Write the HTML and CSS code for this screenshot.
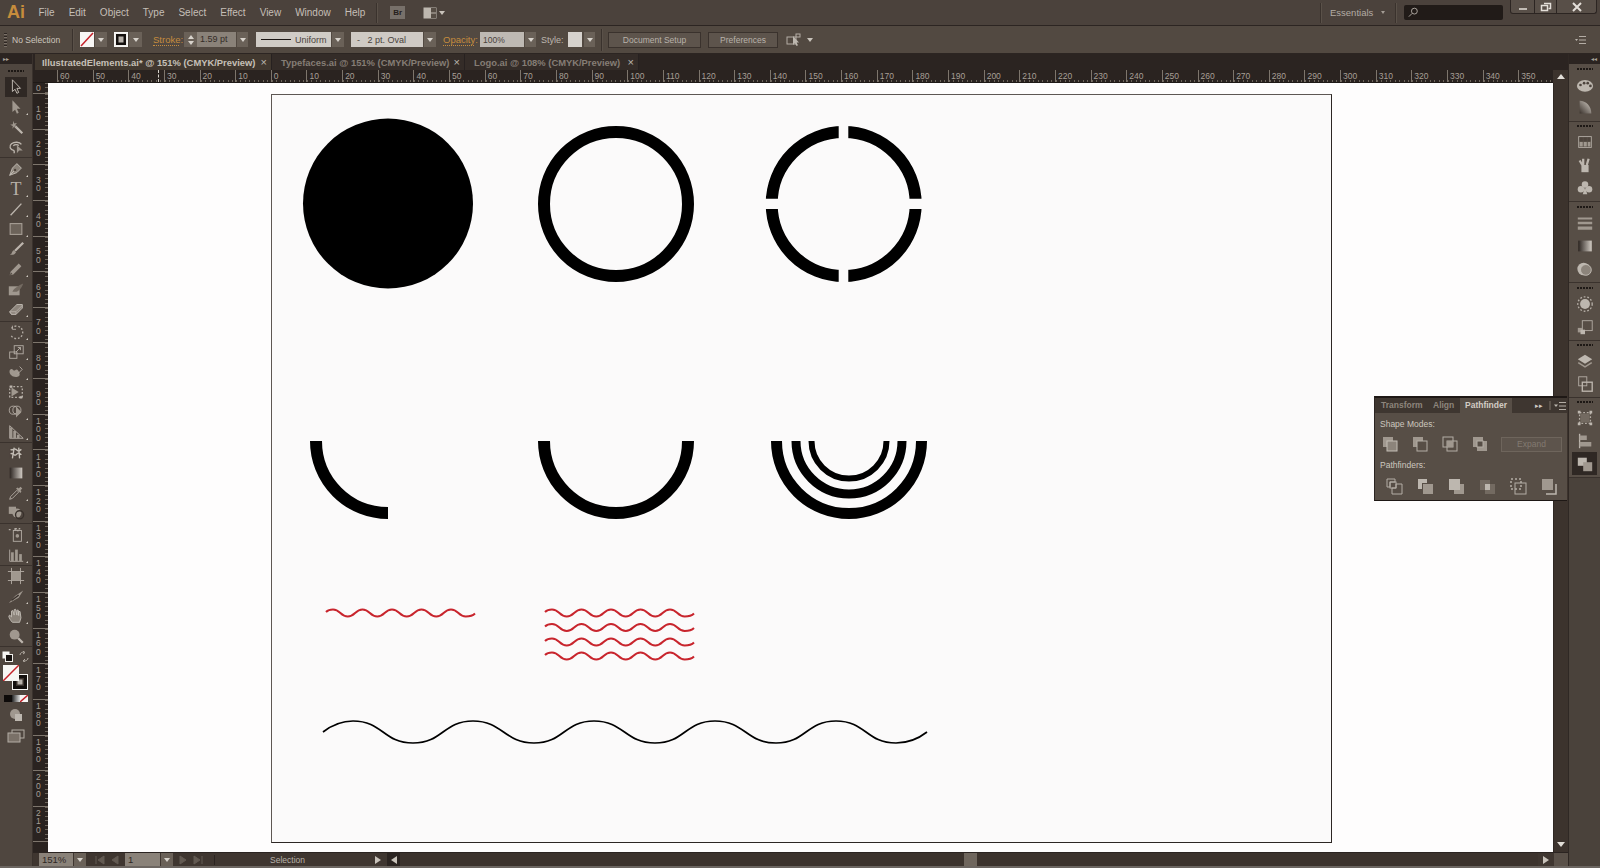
FILE: index.html
```html
<!DOCTYPE html>
<html lang="en">
<head>
<meta charset="utf-8">
<title>Adobe Illustrator</title>
<link rel="stylesheet" href="styles.css">
</head>
<body>
<div class="app">
  <header class="menubar">
    <span class="logo">Ai</span>
    <nav class="menus"><span>File</span><span>Edit</span><span>Object</span><span>Type</span><span>Select</span><span>Effect</span><span>View</span><span>Window</span><span>Help</span></nav>
    <i class="vsep mb-sep"></i>
    <span class="br">Br</span>
    <svg class="layout-ic" viewBox="0 0 14 12"><rect x=".5" y=".5" width="13" height="11" class="lf"/><rect x="8" y="1" width="5" height="4.5" class="df"/><rect x="8" y="6.5" width="5" height="4.5" class="df"/></svg>
    <i class="tri layout-tri"></i>
    <i class="vsep ess-sep"></i>
    <span class="essentials">Essentials</span>
    <i class="tri small ess-tri"></i>
    <i class="vsep ess-sep2"></i>
    <div class="search"><svg class="search-ic" viewBox="0 0 12 12"><circle cx="7.5" cy="4.5" r="3.2"/><path d="M5 7 1.5 10.5"/></svg></div>
    <div class="winbtns">
      <span class="win w-min"><svg viewBox="0 0 12 10"><path d="M2 7h8"/></svg></span>
      <span class="win w-res"><svg viewBox="0 0 12 10"><rect x="1.5" y="3.5" width="6" height="5"/><path d="M4 1.5h6.500v5h-2"/></svg></span>
      <span class="win w-close"><svg viewBox="0 0 12 10"><path d="M2 1l8 8M10 1l-8 8"/></svg></span>
    </div>
  </header>

  <section class="control">
    <i class="bar-grip"></i>
    <span class="lbl nosel">No Selection</span>
    <i class="vsep c-sep"></i>
    <svg class="swatch m7" viewBox="0 0 14 15"><rect width="14" height="15" class="white"/><path d="M1 14 13 1" class="red"/></svg>
    <i class="dd w12 m1"></i>
    <svg class="swatch m7" viewBox="0 0 14 15"><rect width="14" height="15" class="white"/><rect x="1.500" y="1.500" width="11" height="12" class="blk"/><rect x="4.500" y="4.500" width="5" height="6" class="gry"/></svg>
    <i class="dd w13 m1"></i>
    <span class="lbl orange m11 w26">Stroke:</span>
    <span class="spin m5"><i class="up"></i><i class="down"></i></span>
    <span class="field w39">1.59 pt</span>
    <i class="dd w11 m1"></i>
    <span class="lightbox m8 w75"><i class="strokeline"></i>Uniform</span>
    <i class="dd w12 m1"></i>
    <span class="lightbox m7 w72 oval">-&nbsp;&nbsp;&nbsp;2 pt. Oval</span>
    <i class="dd w12 m1"></i>
    <span class="lbl orange m7 w31">Opacity:</span>
    <span class="lightbox m6 w44 pct">100%</span>
    <i class="dd w11 m1"></i>
    <span class="lbl m5 w22">Style:</span>
    <i class="styleswatch m5"></i>
    <i class="dd w11 m2"></i>
    <i class="vsep c-sep2"></i>
    <span class="btn m6 w93">Document Setup</span>
    <span class="btn m7 w70">Preferences</span>
    <svg class="arrange m8" viewBox="0 0 16 14"><rect x="1" y="4" width="9" height="7" class="o"/><path d="M7 3v9l2-2 1.500 3 1.500-.7L10.500 9.500H13z" class="lf"/><rect x="10" y="1" width="4" height="3" class="o"/></svg>
    <i class="tri m5"></i>
    <svg class="ctl-menu" viewBox="0 0 12 10"><path d="M1 4h3L2.500 6z" class="lf"/><path d="M5 1.500h7M5 5h7M5 8.500h7" class="o"/></svg>
  </section>

  <div class="workspace">
    <aside class="tools">
      <div class="panel-top"><span class="chev">&#9656;&#9656;</span></div>
      <div class="grip tool-grip"></div>
      <div class="tgroup g1">
        <div class="tool on"><svg viewBox="0 0 20 20"><path d="M6 2v13l3-2.500 2 4.500 2-1-2-4.500h4z" class="outline"/></svg></div>
        <div class="tool more"><svg viewBox="0 0 20 20"><path d="M6 2.500v13l3-2.500 2 4.500 2-1-2-4.500h4z" class="s"/></svg></div>
        <div class="tool"><svg viewBox="0 0 20 20"><path d="M9 9l8 8" class="thick"/><path d="M7 3l1 3 3-.5-2 2.500 2 3-3-1.500L6 12l.5-3-3-1.500 3-.5z" class="s"/></svg></div>
        <div class="tool"><svg viewBox="0 0 20 20"><path d="M8 14C3 13 2 9 5 6.500s9-2.500 11 .5M7 8.500c1.500-1.500 5-1.500 6 0" class="o2"/><path d="M11 8v9l2.500-3 4 0z" class="s"/><path d="M8 14v3" class="o2"/></svg></div>
      </div>
      <div class="tgroup g2">
        <div class="tool more"><svg viewBox="0 0 20 20"><path d="M3 17l3-8 5-5 5 5-5 5zM3 17l5-5" class="s2"/><circle cx="9" cy="11" r="1.300" class="dk"/></svg></div>
        <div class="tool more tool-t"><span>T</span></div>
        <div class="tool more"><svg viewBox="0 0 20 20"><path d="M4 17 16 4" class="o2"/></svg></div>
        <div class="tool more"><svg viewBox="0 0 20 20"><rect x="3.500" y="4" width="13" height="12" class="rectf"/></svg></div>
        <div class="tool"><svg viewBox="0 0 20 20"><path d="M9 12 18 3" class="thick"/><path d="M3 16c3 0 2-4 5-5l2 2.500c-1 2.500-4 3.500-7 2.500z" class="s"/></svg></div>
        <div class="tool more"><svg viewBox="0 0 20 20"><path d="M3 17l1-4 9-9 3 3-9 9z" class="s"/><path d="M3 17l1.500-3 1.500 1.500z" class="dk"/></svg></div>
        <div class="tool"><svg viewBox="0 0 20 20"><path d="M2 7h12v10H2z" class="s"/><path d="M6 13c2-4 7-7 12-9-1 3-3 7-7 9z" class="dk2"/></svg></div>
        <div class="tool more"><svg viewBox="0 0 20 20"><path d="M3 13 11 5h6v4l-7 7H5z" class="s2"/><path d="M3 13h7v3H5zM10 13l7-7" class="o"/></svg></div>
      </div>
      <div class="tgroup g3">
        <div class="tool more"><svg viewBox="0 0 20 20"><path d="M5 6a7 7 0 1 1-1 7" class="dash"/><path d="M6 3v4h4" class="o"/></svg></div>
        <div class="tool more"><svg viewBox="0 0 20 20"><rect x="3" y="10" width="8" height="7" class="o"/><rect x="8" y="3" width="10" height="9" class="o"/><path d="M10 10l5-5M12 5h3v3" class="o"/></svg></div>
        <div class="tool more"><svg viewBox="0 0 20 20"><path d="M3 8c3-4 4 2 6 0s4 0 5 4-5 4-7 3-5-3-4-7z" class="s"/><path d="M14 4l3 3-5 5" class="o"/></svg></div>
        <div class="tool"><svg viewBox="0 0 20 20"><rect x="3" y="4" width="14" height="12" class="dash"/><path d="M5 5v10l8-5z" class="s"/><path d="M3 4h3M14 16h3" class="thick"/></svg></div>
        <div class="tool more"><svg viewBox="0 0 20 20"><circle cx="7" cy="8" r="4.500" class="o"/><circle cx="11" cy="8" r="4.500" class="o"/><path d="M10 4v12l6-6z" class="s"/></svg></div>
        <div class="tool more"><svg viewBox="0 0 20 20"><path d="M3 3v14h15z" class="o"/><path d="M3 5h3v12H3zM7 9h3v8H7zM11 13h3v4h-3z" class="s"/></svg></div>
      </div>
      <div class="tgroup g4">
        <div class="tool"><svg viewBox="0 0 20 20"><rect x="3" y="4" width="14" height="12" class="dk"/><path d="M4 6c3 2 3-2 6 0s2 3 6 0M4 11c3-2 4 3 6 1s3-3 6 0M8 4l-2 12M13 4l1 12" class="meshl"/></svg></div>
        <div class="tool"><svg viewBox="0 0 20 20"><defs><linearGradient id="gt"><stop offset="0" stop-color="#2d2622"/><stop offset="1" stop-color="#cfc9c2"/></linearGradient></defs><rect x="3" y="4" width="14" height="12" fill="url(#gt)"/></svg></div>
        <div class="tool more"><svg viewBox="0 0 20 20"><path d="M3 17l1-3 7-7 2 2-7 7z" class="o"/><path d="M10 5l5 5 1-2-1-1 2-2-2-2-2 2-1-1z" class="s"/></svg></div>
        <div class="tool"><svg viewBox="0 0 20 20"><rect x="2" y="3" width="8" height="8" class="s"/><circle cx="11" cy="10" r="5" class="s"/><circle cx="14" cy="12" r="4.500" class="dko"/></svg></div>
      </div>
      <div class="tgroup g5">
        <div class="tool more"><svg viewBox="0 0 20 20"><rect x="7" y="5" width="9" height="12" class="o"/><circle cx="11.500" cy="11" r="2" class="s"/><path d="M9 3h5v2H9zM2 4h4" class="dash"/></svg></div>
        <div class="tool more"><svg viewBox="0 0 20 20"><path d="M3 4v13h15" class="o"/><rect x="4.500" y="7" width="3" height="10" class="s"/><rect x="9" y="4" width="3" height="13" class="s"/><rect x="13.500" y="9" width="3" height="8" class="s"/></svg></div>
      </div>
      <div class="tgroup g6">
        <div class="tool"><svg viewBox="0 0 20 20"><path d="M1 5h18M1 15h18M5 1v18M15 1v18" class="o"/><rect x="5" y="5" width="10" height="10" class="s"/></svg></div>
        <div class="tool more"><svg viewBox="0 0 20 20"><path d="M2 18l7-8 9-6-5 8z" class="s"/><path d="M5 15l8-6" class="dko"/></svg></div>
        <div class="tool more"><svg viewBox="0 0 20 20"><path d="M6 17c-2-2-4-5-4-7l1-1 2 2V4.500l1.500-.5L8 9V3l1.500-.5L11 9V3.500l1.500 0L13 9.500V5h1.500L15.500 12l-1.500 5z" class="s2"/></svg></div>
        <div class="tool"><svg viewBox="0 0 20 20"><circle cx="8.500" cy="8.500" r="5.500" class="s"/><path d="M12.500 12.500l5 5" class="thick"/></svg></div>
      </div>
      <div class="colorbox">
        <div class="cb-row">
          <svg viewBox="0 0 11 11"><rect x=".5" y=".5" width="7" height="7" class="white"/><rect x="3.500" y="3.500" width="7" height="7" class="blk"/></svg>
          <svg viewBox="0 0 11 11"><path d="M1 4C1 2 3 1 5 1M9 7c0 2-2 3-4 3M4 0 6 1.500 4 3M6 8 4 10 6 11" class="o"/></svg>
        </div>
        <div class="cb-swatches">
          <svg class="cb-stroke" viewBox="0 0 16 16"><rect width="16" height="16" class="white"/><rect x="2.500" y="2.500" width="11" height="11" class="blk2"/><rect x="5.500" y="5.500" width="5" height="5" class="gry"/></svg>
          <svg class="cb-fill" viewBox="0 0 16 16"><rect width="16" height="16" class="white"/><path d="M0 16 16 0" class="red"/></svg>
        </div>
        <div class="cb-modes"><i class="m-black"></i><i class="m-grad"></i><svg viewBox="0 0 8 7"><rect width="8" height="7" class="white"/><path d="M0 7 8 0" class="red"/></svg></div>
        <svg class="cb-draw" viewBox="0 0 14 14"><circle cx="6" cy="6" r="5" class="s"/><rect x="6" y="6" width="7" height="7" class="lf"/></svg>
        <svg class="cb-screen" viewBox="0 0 18 14"><rect x="5" y="1" width="12" height="8" class="o"/><rect x="1" y="4" width="12" height="9" class="scr"/></svg>
      </div>
    </aside>

    <main class="center">
      <div class="tabs">
        <div class="tab active w237">IllustratedElements.ai* @ 151% (CMYK/Preview)<span class="x">&times;</span></div>
        <div class="tab w193">Typefaces.ai @ 151% (CMYK/Preview)<span class="x">&times;</span></div>
        <div class="tab w174">Logo.ai @ 108% (CMYK/Preview)<span class="x">&times;</span></div>
      </div>
      <div class="corner"></div>
      <div class="hruler">
        <span>60</span><span>50</span><span>40</span><span>30</span><span>20</span><span>10</span><span>0</span><span>10</span><span>20</span><span>30</span><span>40</span><span>50</span><span>60</span><span>70</span><span>80</span><span>90</span><span>100</span><span>110</span><span>120</span><span>130</span><span>140</span><span>150</span><span>160</span><span>170</span><span>180</span><span>190</span><span>200</span><span>210</span><span>220</span><span>230</span><span>240</span><span>250</span><span>260</span><span>270</span><span>280</span><span>290</span><span>300</span><span>310</span><span>320</span><span>330</span><span>340</span><span>350</span>
        <i class="cursor-mark"></i>
      </div>
      <div class="scroll-up"><i class="tri up-tri"></i></div>
      <div class="vruler">
        <span class="zero">0</span><span>10</span><span>20</span><span>30</span><span>40</span><span>50</span><span>60</span><span>70</span><span>80</span><span>90</span><span>100</span><span>110</span><span>120</span><span>130</span><span>140</span><span>150</span><span>160</span><span>170</span><span>180</span><span>190</span><span>200</span><span>210</span>
      </div>
      <div class="canvas">
        <div class="artboard">
          <svg class="art" viewBox="272 95 1059 747">
            <defs>
              <clipPath id="quads">
                <rect x="760" y="120" width="78.700" height="78.700"/>
                <rect x="848.300" y="120" width="80" height="78.700"/>
                <rect x="760" y="209" width="78.700" height="80"/>
                <rect x="848.300" y="209" width="80" height="80"/>
              </clipPath>
              <path id="redwave" d="M0-1C2-3 4-3.500 7-3.500 14.400-3.500 14.400 3.500 21.750 3.500S29.100-3.500 36.500-3.500 43.900 3.500 51.250 3.500 58.600-3.500 66-3.500 73.400 3.500 80.750 3.500 88.100-3.500 95.500-3.500 102.900 3.500 110.250 3.500 117.600-3.500 125-3.500 132.400 3.500 139.750 3.500C144 3.500 147 2.500 149 0.500"/>
            </defs>
            <circle cx="388" cy="203.500" r="85"/>
            <circle class="ln" cx="616" cy="204" r="72" stroke-width="12"/>
            <circle class="ln" cx="843.700" cy="204" r="72" stroke-width="12" clip-path="url(#quads)"/>
            <path class="ln" d="M316 441A72 72 0 0 0 388 513" stroke-width="12"/>
            <path class="ln" d="M544 441A72 72 0 0 0 688 441" stroke-width="12"/>
            <path class="ln" d="M776.500 441A72.500 72.500 0 0 0 921.500 441" stroke-width="11"/>
            <path class="ln" d="M796 441A53 53 0 0 0 902 441" stroke-width="9"/>
            <path class="ln" d="M811.500 441A37.500 37.500 0 0 0 886.500 441" stroke-width="6"/>
            <use class="rw" href="#redwave" x="326" y="613"/>
            <use class="rw" href="#redwave" x="545" y="613"/>
            <use class="rw" href="#redwave" x="545" y="627.500"/>
            <use class="rw" href="#redwave" x="545" y="642"/>
            <use class="rw" href="#redwave" x="545" y="656"/>
            <path class="ln" stroke-width="1.700" d="M323 732C332 725 342 721 353 721 383 721 383 743 413 743S443 721 473 721 504 743 534 743 564 721 594 721 625 743 655 743 685 721 715 721 746 743 776 743 806 721 836 721 866 743 896 743C908 743 918 739 927 732"/>
          </svg>
        </div>
      </div>
      <div class="vscroll"><i class="tri down-tri"></i></div>
      <div class="status">
        <span class="sfield w34">151%</span><i class="dd w12 m1"></i>
        <span class="nav m8"><svg viewBox="0 0 12 10"><path d="M2 1v8M10 1v8L4 5z" class="navi"/></svg></span>
        <span class="nav"><svg viewBox="0 0 12 10"><path d="M9 1v8L3 5z" class="navi"/></svg></span>
        <span class="sfield w35 m1">1</span><i class="dd w12 m1"></i>
        <span class="nav m4"><svg viewBox="0 0 12 10"><path d="M3 1v8l6-4z" class="navi"/></svg></span>
        <span class="nav"><svg viewBox="0 0 12 10"><path d="M2 1v8l6-4zM10 1v8" class="navi"/></svg></span>
        <span class="statuslabel">Selection</span>
        <i class="sarrow right-a"></i>
        <i class="sarrow-box"><i class="sarrow left-a"></i></i>
        <span class="track"><i class="thumb"></i></span>
        <i class="sarrow right-a end-a"></i>
        <i class="scorner"></i>
      </div>
    </main>

    <aside class="dock">
      <div class="panel-top dock-top"><span class="chev">&#9666;&#9666;</span></div>
      <div class="dgroup">
        <div class="grip grip-l"></div>
        <div class="ditem"><svg viewBox="0 0 20 20"><ellipse cx="10" cy="11" rx="9" ry="6.500" class="lf"/><circle cx="5" cy="10" r="1.500" class="dk"/><circle cx="9" cy="8" r="1.500" class="dk"/><circle cx="13" cy="8" r="1.500" class="dk"/><circle cx="16" cy="11" r="1.500" class="dk"/></svg></div>
        <div class="ditem"><svg viewBox="0 0 20 20"><defs><linearGradient id="gq" x1="0" y1="1" x2="1" y2="0"><stop offset="0" stop-color="#3a322c"/><stop offset="1" stop-color="#d8d2ca"/></linearGradient></defs><path d="M4 2c7 0 13 6 13 14H4z" fill="url(#gq)"/></svg></div>
      </div>
      <div class="dgroup">
        <div class="grip"></div>
        <div class="ditem"><svg viewBox="0 0 20 20"><rect x="3" y="4" width="14" height="12" class="o"/><path d="M4 5h3.500v4H4zM8.500 5H12v4H8.500zM13 5h3v4h-3z" class="dk"/><path d="M4 10h3.500v5H4zM8.500 10H12v5H8.500zM13 10h3v5h-3z" class="s"/></svg></div>
        <div class="ditem"><svg viewBox="0 0 20 20"><path d="M6 10h8v8H6z" class="lf"/><path d="M8 10V3M12 10l2-7M7 10 4 5" class="thick"/></svg></div>
        <div class="ditem"><svg viewBox="0 0 20 20"><circle cx="10" cy="6" r="3.600" class="lf"/><circle cx="5.500" cy="11.500" r="3.600" class="lf"/><circle cx="14.500" cy="11.500" r="3.600" class="lf"/><path d="M10 8l-2.500 9h5z" class="lf"/></svg></div>
      </div>
      <div class="dgroup">
        <div class="grip grip-l"></div>
        <div class="ditem"><svg viewBox="0 0 20 20"><path d="M2 4h16v2H2zM2 8.500h16v3H2zM2 14h16v3.500H2z" class="s"/></svg></div>
        <div class="ditem"><svg viewBox="0 0 20 20"><defs><linearGradient id="gd"><stop offset="0" stop-color="#2b2420"/><stop offset="1" stop-color="#d2ccc4"/></linearGradient></defs><rect x="2.500" y="4" width="15" height="12" fill="url(#gd)"/></svg></div>
        <div class="ditem"><svg viewBox="0 0 20 20"><circle cx="8.500" cy="10" r="7" class="lf"/><circle cx="11" cy="11" r="6" class="s2"/></svg></div>
      </div>
      <div class="dgroup">
        <div class="grip grip-l"></div>
        <div class="ditem"><svg viewBox="0 0 20 20"><circle cx="10" cy="10" r="8" class="dash"/><circle cx="10" cy="10" r="5.500" class="lf"/></svg></div>
        <div class="ditem"><svg viewBox="0 0 20 20"><rect x="7" y="3" width="11" height="11" class="o"/><rect x="2" y="11" width="5" height="5" class="s"/><rect x="5" y="13" width="5" height="5" class="lf"/></svg></div>
      </div>
      <div class="dgroup">
        <div class="grip"></div>
        <div class="ditem"><svg viewBox="0 0 20 20"><path d="M10 3l8 5-8 5-8-5z" class="lf"/><path d="M3 11l7 4.500 7-4.500 1 1.500-8 5-8-5z" class="s"/></svg></div>
        <div class="ditem"><svg viewBox="0 0 20 20"><rect x="3" y="2" width="9" height="10" class="o"/><rect x="7" y="8" width="11" height="10" class="o2"/></svg></div>
      </div>
      <div class="dgroup">
        <div class="grip"></div>
        <div class="ditem"><svg viewBox="0 0 20 20"><rect x="4" y="4" width="12" height="12" class="dash"/><rect x="5" y="5" width="10" height="10" class="dk2"/><path d="M2 2h3v3H2zM15 2h3v3h-3zM2 15h3v3H2zM15 15h3v3h-3z" class="lf"/></svg></div>
        <div class="ditem"><svg viewBox="0 0 20 20"><path d="M4 2v16" class="o2"/><path d="M4 4h8v5H4zM4 11h13v5H4z" class="s"/></svg></div>
        <div class="ditem on"><svg viewBox="0 0 20 20"><rect x="2" y="3" width="10" height="9" class="lf"/><rect x="8" y="8" width="10" height="10" class="s"/></svg></div>
      </div>
    </aside>
  </div>
  <div class="bottomstrip"></div>

  <div class="pathfinder">
    <div class="pf-tabs">
      <span class="pf-tab t1">Transform</span><span class="pf-tab t2">Align</span><span class="pf-tab active">Pathfinder</span>
      <span class="pf-chev">&#9656;&#9656;</span><i class="pf-div"></i>
      <svg class="pf-menu" viewBox="0 0 12 10"><path d="M0 3.500h4L2 6z" class="lf"/><path d="M5 1.500h7M5 5h7M5 8.500h7" class="o"/></svg>
    </div>
    <div class="pf-title pf-t1">Shape Modes:</div>
    <div class="pf-row shape">
      <svg viewBox="0 0 20 20"><rect x="3" y="3" width="10" height="10" class="s"/><rect x="7" y="7" width="10" height="10" class="s2"/></svg>
      <svg viewBox="0 0 20 20"><path d="M3 3h10v4H7v6H3z" class="s"/><rect x="7" y="7" width="10" height="10" class="o"/></svg>
      <svg viewBox="0 0 20 20"><rect x="3" y="3" width="10" height="10" class="o"/><rect x="7" y="7" width="10" height="10" class="o"/><rect x="7" y="7" width="6" height="6" class="s"/></svg>
      <svg viewBox="0 0 20 20"><path d="M3 3h10v4H7v6H3zM13 7h4v10H7v-4h6z" class="s"/><rect x="7" y="7" width="6" height="6" class="o"/></svg>
      <span class="expand">Expand</span>
    </div>
    <div class="pf-title pf-t2">Pathfinders:</div>
    <div class="pf-row finders">
      <svg viewBox="0 0 20 20"><path d="M3 3h8v3H6v5H3z" class="o"/><rect x="6" y="6" width="6" height="6" class="o"/><path d="M12 8h6v10H8v-6h4z" class="o"/></svg>
      <svg viewBox="0 0 20 20"><path d="M3 3h9v4H7v6H3z" class="lf"/><path d="M8 8h10v10H8z" class="s"/></svg>
      <svg viewBox="0 0 20 20"><rect x="8" y="8" width="10" height="10" class="s"/><rect x="3" y="3" width="11" height="11" class="lf"/></svg>
      <svg viewBox="0 0 20 20"><rect x="3" y="4" width="10" height="10" class="dk2"/><rect x="8" y="8" width="10" height="10" class="dk2"/><rect x="8" y="8" width="5" height="6" class="lf"/></svg>
      <svg viewBox="0 0 20 20"><rect x="3" y="3" width="10" height="10" class="dash"/><rect x="7" y="7" width="11" height="11" class="o"/></svg>
      <svg viewBox="0 0 20 20"><rect x="3" y="3" width="11" height="11" class="s"/><path d="M17 8v10H7" class="o2"/></svg>
    </div>
  </div>
</div>
</body>
</html>
```
FILE: styles.css
```css
* { box-sizing: border-box; }
html, body { margin: 0; padding: 0; }
body { background: #4b423c; font-family: "Liberation Sans", Arial, sans-serif; font-size: 10px; color: #c9c3bb; overflow: hidden; }
i { display: block; flex: none; }
svg { display: block; flex: none; }

.app { position: relative; width: 1600px; height: 868px; display: flex; flex-direction: column; overflow: hidden; }

/* menu bar */
.menubar { height: 26px; flex: none; display: flex; align-items: center; background: #4b423c; border-bottom: 1px solid #2c2522; }
.logo { width: 38.500px; padding-left: 7px; font-size: 18px; font-weight: bold; color: #c68c3c; }
.menus { display: flex; gap: 14px; color: #c5bfb7; }
.vsep { width: 1px; height: 20px; background: #3a322d; box-shadow: 1px 0 0 #5a5149; }
.mb-sep { margin-left: 11px; }
.br { margin-left: 13px; width: 15px; height: 13px; background: #77706a; color: #26201c; font-size: 8px; font-weight: bold; line-height: 13px; text-align: center; }
.layout-ic { margin-left: 18px; width: 14px; height: 12px; }
.layout-tri { margin-left: 2px; }
.ess-sep { margin-left: auto; }
.essentials { margin-left: 9px; width: 42px; color: #b3aca4; font-size: 9.500px; }
.ess-tri { margin-left: 9px; }
.ess-sep2 { margin-left: 10px; }
.search { margin-left: 8px; width: 99px; height: 15px; background: #211b18; border-radius: 2px; padding: 2px 0 0 3px; }
.search-ic { width: 12px; height: 11px; fill: none; stroke: #b5aea6; }
.winbtns { margin-left: 7px; margin-right: 3px; align-self: flex-start; display: flex; height: 14px; background: #584f48; border: 1px solid #2c2522; border-top: 0; border-radius: 0 0 3px 3px; }
.win { height: 13px; display: flex; align-items: center; justify-content: center; border-right: 1px solid #2c2522; }
.win svg { width: 12px; height: 10px; fill: none; stroke: #e4dfd9; stroke-width: 1.500; }
.w-min { width: 24px; }
.w-res { width: 22px; }
.w-close { width: 39px; border-right: 0; }
.w-close svg { stroke-width: 2; }

/* control bar */
.control { height: 28px; flex: none; display: flex; align-items: center; background: #524941; border-bottom: 1px solid #2c2522; }
.bar-grip { margin-left: 4px; width: 3px; height: 14px; background: repeating-linear-gradient(180deg, #2c2522 0 1px, #7b7168 1px 2px, transparent 2px 3px); }
.lbl { white-space: nowrap; color: #bdb7af; font-size: 9px; }
.nosel { margin-left: 5px; width: 60px; color: #cdc7bf; font-size: 8.500px; }
.c-sep { height: 22px; }
.c-sep2 { margin-left: 6px; height: 22px; }
.orange { color: #c58c3e; font-size: 9.500px; border-bottom: 1px dotted #c58c3e; line-height: 11px; }
.swatch { width: 14px; height: 15px; }
.dd { height: 15px; background: #6a6158; position: relative; }
.dd::after { content: ""; position: absolute; left: 50%; top: 50%; margin: -2px 0 0 -3px; border: 3px solid transparent; border-top: 4px solid #d8d3cc; border-bottom: 0; }
.tri { width: 0; height: 0; border-left: 3px solid transparent; border-right: 3px solid transparent; border-top: 4px solid #c9c3bb; }
.tri.small { border-width: 3px 2.500px 0; border-top-color: #a49d95; }
.spin { width: 13px; height: 15px; background: #6a6158; display: flex; flex-direction: column; align-items: center; justify-content: center; gap: 2px; }
.spin .up { border: 3px solid transparent; border-bottom: 4px solid #d8d3cc; border-top: 0; }
.spin .down { border: 3px solid transparent; border-top: 4px solid #d8d3cc; border-bottom: 0; }
.field { height: 15px; background: #8a8279; color: #342c27; line-height: 15px; padding-left: 3px; font-size: 9px; }
.lightbox { height: 15px; background: #d0ccc6; color: #4a423c; display: flex; align-items: center; white-space: nowrap; font-size: 9px; padding-left: 5px; }
.oval { padding-left: 6px; background: #cfcac4; }
.pct { padding-left: 3px; background: #beb9b3; font-size: 8.500px; }
.strokeline { width: 30px; height: 1.500px; background: #1c1714; margin-right: 4px; }
.styleswatch { width: 14px; height: 15px; background: #d6d2cd; }
.btn { height: 16px; background: #5d544c; border: 1px solid #3a322d; color: #b8b2aa; line-height: 14px; text-align: center; font-size: 8.500px; }
.arrange { width: 16px; height: 14px; }
.ctl-menu { margin-left: auto; margin-right: 14px; width: 12px; height: 10px; }

.m1 { margin-left: 1px; } .m2 { margin-left: 2px; } .m4 { margin-left: 4px; } .m5 { margin-left: 5px; } .m6 { margin-left: 6px; } .m7 { margin-left: 7px; } .m8 { margin-left: 8px; } .m11 { margin-left: 11px; }
.w11 { width: 11px; } .w12 { width: 12px; } .w13 { width: 13px; } .w22 { width: 22px; } .w26 { width: 26px; } .w31 { width: 31px; } .w34 { width: 34px; } .w35 { width: 35px; } .w39 { width: 39px; } .w44 { width: 44px; } .w70 { width: 70px; } .w72 { width: 72px; } .w75 { width: 75px; } .w93 { width: 93px; } .w174 { width: 174px; } .w193 { width: 193px; } .w237 { width: 237px; }

/* icon paint */
.o { fill: none; stroke: #b4ada5; stroke-width: 1; }
.o2 { fill: none; stroke: #bdb6ae; stroke-width: 1.500; }
.s { fill: #a0988f; stroke: none; }
.s2 { fill: #8c847b; stroke: #c3bdb5; stroke-width: 1; }
.lf { fill: #bdb7af; stroke: none; }
.df { fill: #564d45; stroke: none; }
.dk { fill: #4d443d; stroke: none; }
.dk2 { fill: #736a61; stroke: none; }
.dko { fill: none; stroke: #38302b; stroke-width: 1.500; }
.thick { fill: none; stroke: #bdb6ae; stroke-width: 2.500; }
.dash { fill: none; stroke: #b4ada5; stroke-width: 1.500; stroke-dasharray: 2 2; }
.outline { fill: #2f2824; stroke: #c9c3bb; stroke-width: 1; }
.rectf { fill: #6c635a; stroke: #a79f96; stroke-width: 1.200; }
.meshl { fill: none; stroke: #c3bdb5; stroke-width: 1.500; }
.white { fill: #f7f6f4; }
.red { fill: none; stroke: #c4222a; stroke-width: 1.500; }
.blk { fill: #14100e; stroke: #f0eeeb; stroke-width: 1; }
.blk2 { fill: #3a322d; stroke: #14100e; stroke-width: 3; }
.gry { fill: #b8b2ab; }
.scr { fill: #7a7168; stroke: #b4ada5; stroke-width: 1; }
.navi { fill: #635a52; stroke: #635a52; stroke-width: 1; }

/* workspace */
.workspace { flex: 1; min-height: 0; display: flex; }
.panel-top { height: 10px; background: #2b2421; display: flex; align-items: center; }
.chev { font-size: 6px; line-height: 10px; color: #a9a299; padding: 0 3px; }
.grip { height: 8px; display: flex; align-items: center; justify-content: center; }
.grip::before { content: ""; width: 16px; height: 2px; background: repeating-linear-gradient(90deg, #1d1815 0 2px, transparent 2px 3px); }
.grip-l { height: 9px; }

/* tools */
.tools { width: 33px; flex: none; background: #4f463f; border-right: 1px solid #3a322d; }
.tool-grip { height: 13px; }
.tgroup { border-bottom: 1px solid #3a322d; padding: 0 0 1px; }
.g1 { padding-bottom: 0; }
.g2 { padding-top: 1px; padding-bottom: 2px; }
.g3 { padding-bottom: 0; }
.g4 { padding-bottom: 0; }
.g5 { padding-top: 1px; padding-bottom: 0; }
.g6 { padding-bottom: 0; }
.tool { height: 20px; position: relative; display: flex; align-items: center; justify-content: center; }
.tool svg { width: 18px; height: 18px; }
.tool.on { margin: 0 5px; background: #2f2824; }
.tool.more::after { content: ""; position: absolute; right: 4px; bottom: 2px; border: 1.500px solid transparent; border-right-color: #cfc9c1; border-bottom-color: #cfc9c1; }
.tool-t span { font-family: "Liberation Serif", serif; font-size: 18px; line-height: 20px; color: #b7b0a8; }

.colorbox { position: relative; display: flex; flex-direction: column; align-items: center; }
.cb-row { margin-top: 2px; height: 14px; width: 28px; display: flex; justify-content: space-between; align-items: center; }
.cb-row svg { width: 11px; height: 11px; }
.cb-swatches { position: relative; margin-top: 2px; width: 26px; height: 25px; }
.cb-fill { position: absolute; left: 0; top: 0; width: 16px; height: 16px; }
.cb-stroke { position: absolute; left: 9px; top: 9px; width: 16px; height: 16px; }
.cb-modes { margin-top: 5px; display: flex; width: 24px; height: 7px; }
.cb-modes i { width: 8px; }
.cb-modes svg { width: 8px; height: 7px; }
.m-black { background: #0d0a09; }
.m-grad { background: linear-gradient(90deg, #222, #ddd); }
.cb-draw { margin-top: 6px; width: 14px; height: 14px; }
.cb-screen { margin-top: 7px; width: 18px; height: 14px; }

/* centre grid */
.center { flex: 1; min-width: 0; display: grid; grid-template-columns: 15px 1fr 15px; grid-template-rows: 16px 13px 1fr 14px; }
.tabs { grid-column: 1 / -1; display: flex; background: #2b2421; padding-left: 2px; }
.tab { position: relative; background: #342c28; color: #857d75; font-weight: bold; font-size: 9.400px; line-height: 17px; padding-left: 9px; white-space: nowrap; border-right: 1px solid #272120; }
.tab.active { background: #41382f; color: #c6c0b8; padding-left: 7px; }
.x { position: absolute; right: 4px; top: 0; font-size: 11px; font-weight: normal; color: #bdb7af; line-height: 16px; }

.corner { background: #2a2320; border-bottom: 1px solid #1e1916; }
.hruler { position: relative; display: flex; padding-left: 9px; overflow: hidden; background: linear-gradient(#2a2320, #2a2320); border-bottom: 1px solid #1e1916; }
.hruler span { flex: 0 0 35.650px; height: 100%; border-left: 1px solid #7d756c; padding-left: 2px; font-size: 8.500px; line-height: 12px; color: #a79f96; background: repeating-linear-gradient(90deg, #6d655c 0 1px, transparent 1px 4.456px) left bottom / 100% 2px no-repeat; }
.cursor-mark { position: absolute; left: 110px; top: 0; bottom: 0; border-left: 1px dashed #d7d2cb; }
.scroll-up { background: #3c332d; display: flex; align-items: center; justify-content: center; }
.up-tri { border-top: 0; border-bottom: 5px solid #e2ded8; border-left-width: 4px; border-right-width: 4px; }

.vruler { overflow: hidden; background: #2a2320; }
.vruler span { display: flex; align-items: flex-end; height: 35.650px; padding: 0 6px 7px 3px; border-bottom: 1px solid #7d756c; width: 100%; font-size: 8.500px; line-height: 8.500px; color: #a79f96; word-break: break-all; background: repeating-linear-gradient(180deg, #6d655c 0 1px, transparent 1px 4.456px) right top / 3px 100% no-repeat; }
.vruler .zero { height: 11px; padding-bottom: 1px; }

.canvas { position: relative; min-height: 0; background: #fefdfd; padding: 11px 0 0 223px; overflow: hidden; }
.artboard { width: 1061px; height: 749px; background: #fbfafa; border: 1px solid #5d5753; border-right-color: #2d2724; border-bottom-color: #2d2724; }
.art { width: 1059px; height: 747px; fill: #000; }
.ln { fill: none; stroke: #000; }
.rw { fill: none; stroke: #c8252d; stroke-width: 2; }

.vscroll { background: #3c332d; border-left: 1px solid #2f2824; display: flex; align-items: flex-end; justify-content: center; padding-bottom: 5px; }
.down-tri { border-top-width: 5px; border-left-width: 4px; border-right-width: 4px; border-top-color: #e2ded8; }

.status { grid-column: 1 / -1; display: flex; align-items: center; background: #3f3630; padding-left: 6px; border-top: 1px solid #2b2421; }
.sfield { height: 13px; background: #8a8279; color: #2f2824; font-size: 9.500px; line-height: 14px; padding-left: 3px; }
.status .dd { height: 13px; }
.nav { width: 15px; }
.nav svg { width: 12px; height: 10px; }
.statuslabel { margin-left: 7px; width: 160px; padding-right: 14px; text-align: center; color: #b8b2aa; font-size: 8.500px; border-left: 1px solid #2b2421; }
.sarrow { width: 0; height: 0; border-top: 4px solid transparent; border-bottom: 4px solid transparent; }
.right-a { margin-left: 1px; border-left: 6px solid #c9c3bb; }
.left-a { border-right: 6px solid #c9c3bb; }
.sarrow-box { margin-left: 6px; width: 13px; height: 13px; background: #2b2421; display: flex; align-items: center; justify-content: center; }
.track { flex: 1; height: 13px; background: #3c332d; }
.thumb { margin-left: 564px; width: 13px; height: 13px; background: #6f665d; }
.end-a { margin: 0 5px; }
.scorner { width: 14px; height: 13px; background: #5a5149; }

/* dock */
.dock { width: 32px; flex: none; background: #4a423b; border-left: 1px solid #2f2824; }
.dock-top { justify-content: flex-end; }
.dgroup { background: #574e46; border-bottom: 1px solid #3a322d; padding-bottom: 2px; }
.ditem { height: 23px; display: flex; align-items: center; justify-content: center; }
.ditem svg { width: 18px; height: 18px; }
.ditem.on { margin: 0 3px; background: #2f2824; }

/* floating pathfinder panel */
.pathfinder { position: absolute; left: 1374px; top: 396px; width: 193px; height: 105px; background: #574e46; border-top: 2px solid #1e1815; border-bottom: 1px solid #1e1815; border-left: 1px solid #2c2522; }
.pf-tabs { height: 15px; display: flex; align-items: center; background: #3e3630; font-size: 8.500px; font-weight: bold; color: #8d857c; }
.pf-tab { line-height: 15px; }
.pf-tab.t1 { margin-left: 6px; width: 52px; }
.pf-tab.t2 { width: 27px; }
.pf-tab.active { width: 52px; height: 15px; background: #574e46; color: #d2ccc4; padding-left: 5px; }
.pf-chev { margin-left: 23px; font-size: 7px; font-weight: normal; color: #d2ccc4; }
.pf-div { margin-left: 6px; width: 2px; height: 9px; background: #5d544c; }
.pf-menu { margin-left: 3px; width: 12px; height: 10px; }
.pf-title { padding-left: 5px; font-size: 8.500px; color: #cdc7bf; line-height: 12px; }
.pf-t1 { margin-top: 5px; }
.pf-t2 { margin-top: 5px; }
.pf-row { display: flex; align-items: center; }
.pf-row svg { width: 20px; height: 20px; }
.shape { margin-top: 4px; padding-left: 5px; gap: 10px; height: 20px; }
.finders { margin-top: 5px; padding-left: 9px; gap: 11px; height: 20px; }
.expand { margin-left: 1px; width: 61px; height: 15px; background: #5d544c; border: 1px solid #6e655c; color: #827a71; text-align: center; line-height: 13px; font-size: 8.500px; }

.bottomstrip { height: 2px; flex: none; background: #6c6661; }
```
